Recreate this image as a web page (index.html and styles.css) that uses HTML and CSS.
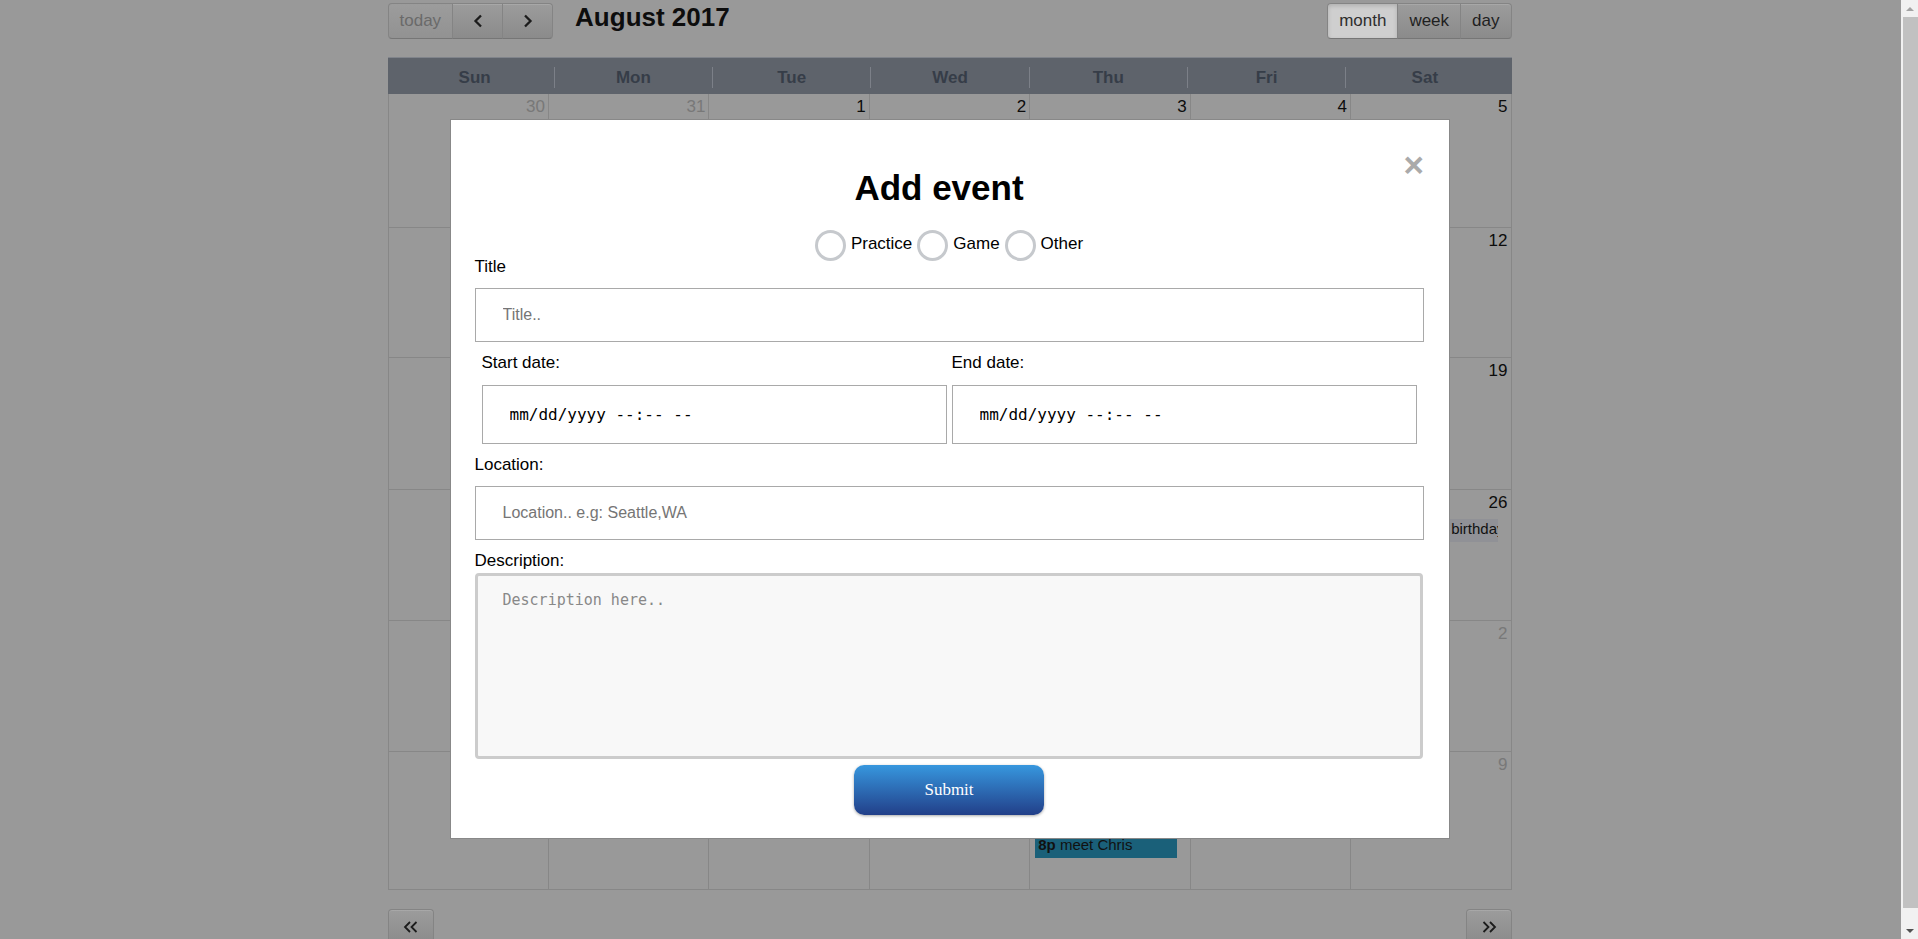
FILE: index.html
```html
<!DOCTYPE html>
<html lang="en">
<head>
<meta charset="utf-8">
<title>Calendar - Add event</title>
<link rel="stylesheet" href="styles.css">
</head>
<body>
<div class="page">
  <div class="calendar">
    <div class="toolbar">
      <div class="btn-group">
        <button class="fc-btn today" disabled>today</button>
        <button class="fc-btn icon-btn" aria-label="prev"><svg width="10" height="14" viewBox="0 0 10 14"><polyline points="8,1.5 2.5,7 8,12.5" fill="none" stroke="#1c1c1c" stroke-width="2.3"/></svg></button>
        <button class="fc-btn icon-btn" aria-label="next"><svg width="10" height="14" viewBox="0 0 10 14"><polyline points="2,1.5 7.5,7 2,12.5" fill="none" stroke="#1c1c1c" stroke-width="2.3"/></svg></button>
      </div>
      <h2 class="cal-title">August 2017</h2>
      <div class="btn-group views">
        <button class="fc-btn active">month</button>
        <button class="fc-btn">week</button>
        <button class="fc-btn">day</button>
      </div>
    </div>

    <div class="cal-head">
      <div class="dow">Sun</div>
      <div class="dow">Mon</div>
      <div class="dow">Tue</div>
      <div class="dow">Wed</div>
      <div class="dow">Thu</div>
      <div class="dow">Fri</div>
      <div class="dow">Sat</div>
    </div>

    <div class="cal-body">
      <div class="day other"><div class="num">30</div></div>
      <div class="day other"><div class="num">31</div></div>
      <div class="day"><div class="num">1</div></div>
      <div class="day"><div class="num">2</div></div>
      <div class="day"><div class="num">3</div></div>
      <div class="day"><div class="num">4</div></div>
      <div class="day"><div class="num">5</div></div>

      <div class="day"><div class="num">6</div></div>
      <div class="day"><div class="num">7</div></div>
      <div class="day"><div class="num">8</div></div>
      <div class="day"><div class="num">9</div></div>
      <div class="day"><div class="num">10</div></div>
      <div class="day"><div class="num">11</div></div>
      <div class="day"><div class="num">12</div></div>

      <div class="day"><div class="num">13</div></div>
      <div class="day"><div class="num">14</div></div>
      <div class="day"><div class="num">15</div></div>
      <div class="day"><div class="num">16</div></div>
      <div class="day"><div class="num">17</div></div>
      <div class="day"><div class="num">18</div></div>
      <div class="day"><div class="num">19</div></div>

      <div class="day"><div class="num">20</div></div>
      <div class="day"><div class="num">21</div></div>
      <div class="day"><div class="num">22</div></div>
      <div class="day"><div class="num">23</div></div>
      <div class="day"><div class="num">24</div></div>
      <div class="day"><div class="num">25</div></div>
      <div class="day"><div class="num">26</div><div class="event ev-allday">Christopher's birthday</div></div>

      <div class="day"><div class="num">27</div></div>
      <div class="day"><div class="num">28</div></div>
      <div class="day"><div class="num">29</div></div>
      <div class="day"><div class="num">30</div></div>
      <div class="day"><div class="num">31</div></div>
      <div class="day other"><div class="num">1</div></div>
      <div class="day other"><div class="num">2</div></div>

      <div class="day other"><div class="num">3</div></div>
      <div class="day other"><div class="num">4</div></div>
      <div class="day other"><div class="num">5</div></div>
      <div class="day other"><div class="num">6</div></div>
      <div class="day other"><div class="num">7</div>
        <div class="event ev-timed"><b>10a</b> practice</div>
        <div class="event ev-timed"><b>2p</b> game</div>
        <div class="event ev-timed"><b>8p</b> meet Chris</div>
      </div>
      <div class="day other"><div class="num">8</div></div>
      <div class="day other"><div class="num">9</div></div>
    </div>

    <div class="cal-footer">
      <button class="fc-btn nav-btn" aria-label="previous year"><svg width="16" height="12" viewBox="0 0 16 12"><polyline points="7,1 2,6 7,11" fill="none" stroke="#1c1c1c" stroke-width="1.8"/><polyline points="13.5,1 8.5,6 13.5,11" fill="none" stroke="#1c1c1c" stroke-width="1.8"/></svg></button>
      <button class="fc-btn nav-btn" aria-label="next year"><svg width="16" height="12" viewBox="0 0 16 12"><polyline points="2.5,1 7.5,6 2.5,11" fill="none" stroke="#1c1c1c" stroke-width="1.8"/><polyline points="9,1 14,6 9,11" fill="none" stroke="#1c1c1c" stroke-width="1.8"/></svg></button>
    </div>
  </div>

  <div class="overlay">
    <form class="modal">
      <div class="modal-head">
        <h2 class="modal-title">Add event</h2>
        <button type="button" class="close" aria-label="close">&times;</button>
      </div>
      <div class="types">
        <label class="type"><input type="radio" name="type" class="radio"><span class="type-text">Practice</span></label>
        <label class="type"><input type="radio" name="type" class="radio"><span class="type-text">Game</span></label>
        <label class="type"><input type="radio" name="type" class="radio"><span class="type-text">Other</span></label>
      </div>
      <label class="field-label">Title</label>
      <input type="text" class="text-input" placeholder="Title..">
      <div class="dates">
        <div class="date-col">
          <label class="field-label">Start date:</label>
          <input type="text" class="date-input" placeholder="mm/dd/yyyy --:-- --">
        </div>
        <div class="date-col">
          <label class="field-label">End date:</label>
          <input type="text" class="date-input" placeholder="mm/dd/yyyy --:-- --">
        </div>
      </div>
      <label class="field-label">Location:</label>
      <input type="text" class="text-input" placeholder="Location.. e.g: Seattle,WA">
      <label class="field-label">Description:</label>
      <textarea class="desc" placeholder="Description here.."></textarea>
      <div class="actions">
        <button type="submit" class="submit">Submit</button>
      </div>
    </form>
  </div>
</div>

<div class="scrollbar">
  <div class="sb-btn"><span class="arrow-up"></span></div>
  <div class="sb-thumb"></div>
  <div class="sb-btn"><span class="arrow-down"></span></div>
</div>
</body>
</html>
```

FILE: styles.css
```css
html, body {
  margin: 0;
  height: 939px;
  overflow: hidden;
}

body {
  display: flex;
  background: #999999;
  font-family: "Liberation Sans", Arial, sans-serif;
  font-size: 17px;
  color: #0d0d0d;
}

.page {
  flex: 1;
  position: relative;
  min-width: 0;
  padding-right: 2px;
}

/* ---------- calendar ---------- */
.calendar {
  width: 1124px;
  margin: 0 auto;
  padding-top: 3px;
}

.toolbar {
  display: flex;
  align-items: flex-start;
  height: 36px;
  margin-bottom: 18px;
}

.btn-group {
  display: flex;
}

.fc-btn {
  height: 36px;
  box-sizing: border-box;
  margin: 0;
  padding: 0 11px;
  border: 1px solid #848484;
  border-bottom-color: #767676;
  background: linear-gradient(#9c9c9c, #8b8b8b);
  box-shadow: inset 0 1px 0 rgba(255, 255, 255, 0.12);
  font-family: "Liberation Sans", Arial, sans-serif;
  font-size: 17px;
  color: #1f1f1f;
  display: flex;
  align-items: center;
  justify-content: center;
}

.btn-group .fc-btn + .fc-btn {
  margin-left: -1px;
}

.btn-group .fc-btn:first-child {
  border-radius: 4px 0 0 4px;
}

.btn-group .fc-btn:last-child {
  border-radius: 0 4px 4px 0;
}

.fc-btn.today {
  color: #6a6a6a;
  background: linear-gradient(#9c9c9c, #929292);
  box-shadow: none;
}

.icon-btn {
  width: 51px;
  padding: 0;
}

.fc-btn.active {
  background: #cfcfcf;
  color: #2e2e2e;
  box-shadow: inset 0 2px 4px rgba(0, 0, 0, 0.15);
}

.cal-title {
  margin: 0 0 0 22px;
  font-size: 26px;
  font-weight: bold;
  line-height: 1.15;
  color: #0d0d0d;
}

.views {
  margin-left: auto;
}

.cal-head {
  display: grid;
  grid-template-columns: repeat(7, 1fr);
  height: 37px;
  box-sizing: border-box;
  padding: 9px 8px 7px;
  background: #5e636b;
  border-top: 1px solid #80848b;
}

.dow {
  height: 21px;
  line-height: 21px;
  text-align: center;
  font-weight: bold;
  color: #363d48;
}

.dow + .dow {
  border-left: 1px solid #7c8088;
}

.cal-body {
  display: grid;
  grid-template-columns: repeat(7, 1fr);
  grid-template-rows: 134px 130px 132px 131px 131px 138px;
  border-left: 1px solid #878787;
}

.day {
  border-right: 1px solid #878787;
  border-bottom: 1px solid #878787;
  min-width: 0;
  overflow: hidden;
}

.num {
  padding: 3px 3px 2px;
  line-height: 20px;
  text-align: right;
  color: #0c0c0c;
}

.day.other .num {
  color: #787878;
}

.event {
  margin: 4px 13px 0 5px;
  padding: 1px 2px 5px 3px;
  font-size: 15px;
  line-height: 17px;
  white-space: nowrap;
  overflow: hidden;
  color: #111111;
}

.ev-allday {
  background: #909196;
}

.ev-timed {
  background: #1a6079;
}

.cal-footer {
  display: flex;
  justify-content: space-between;
  margin-top: 19px;
}

.nav-btn {
  width: 46px;
  padding: 0;
  border-radius: 4px;
}

/* ---------- modal ---------- */
.overlay {
  position: absolute;
  top: 0;
  left: 0;
  right: 2px;
  bottom: 0;
  display: flex;
  justify-content: center;
  align-items: flex-start;
  padding-top: 119px;
}

.modal {
  width: 1000px;
  box-sizing: border-box;
  margin: 0;
  padding: 25px 25px 23px 24px;
  background: #ffffff;
  border: 1px solid #888888;
  color: #000000;
}

.modal-head {
  display: flex;
  align-items: flex-start;
}

.modal-title {
  flex: 1;
  margin: 22.75px 0 0;
  text-align: center;
  font-size: 35px;
  font-weight: bold;
  line-height: normal;
  color: #000000;
}

.close {
  width: 20px;
  margin: 0;
  padding: 0;
  border: none;
  background: none;
  font-family: "Liberation Sans", Arial, sans-serif;
  font-size: 35px;
  font-weight: bold;
  line-height: normal;
  color: #aaaaaa;
  text-align: center;
}

.types {
  display: flex;
  justify-content: center;
  align-items: center;
  gap: 5px;
  margin-top: 22.7px;
  margin-bottom: -4.7px;
}

.type {
  display: flex;
  align-items: center;
  gap: 5px;
  font-size: 17px;
}

.radio {
  appearance: none;
  -webkit-appearance: none;
  width: 31px;
  height: 31px;
  box-sizing: border-box;
  margin: 0;
  border: 3px solid #c6c9cd;
  border-radius: 50%;
  background: #ffffff;
}

.type-text {
  padding-bottom: 4px;
}

.field-label {
  display: block;
  font-size: 17px;
  line-height: normal;
  color: #000000;
}

.text-input,
.date-input {
  display: block;
  width: 100%;
  box-sizing: border-box;
  margin: 11.5px 0 11px;
  border: 1px solid #a9a9a9;
  border-radius: 0;
  background: #ffffff;
  outline: none;
}

.text-input {
  height: 54px;
  padding: 0 27px;
  font-family: "Liberation Sans", Arial, sans-serif;
  font-size: 16px;
}

.text-input::placeholder {
  color: #757575;
}

.dates {
  display: flex;
  justify-content: center;
  gap: 5px;
}

.date-col {
  width: 49%;
}

.date-input {
  height: 59px;
  padding: 0 27px;
  font-family: "DejaVu Sans Mono", "Liberation Mono", monospace;
  font-size: 16px;
}

.date-input::placeholder {
  color: #000000;
  opacity: 1;
}

.desc {
  display: block;
  width: calc(100% - 1px);
  height: 186px;
  box-sizing: border-box;
  margin: 2px 0 0;
  padding: 15px 25px;
  border: 3px solid #cccccc;
  border-radius: 4px;
  background: #f8f8f8;
  font-family: "DejaVu Sans Mono", "Liberation Mono", monospace;
  font-size: 15px;
  resize: none;
  outline: none;
}

.desc::placeholder {
  color: #888888;
}

.actions {
  display: flex;
  justify-content: center;
  margin-top: 6px;
}

.submit {
  width: 190px;
  height: 50px;
  border: none;
  border-radius: 10px;
  background: linear-gradient(#3797de, #223f89);
  box-shadow: 0 1px 3px rgba(0, 0, 0, 0.35);
  color: #ffffff;
  font-family: "Liberation Serif", "Times New Roman", serif;
  font-size: 17px;
}

/* ---------- scrollbar ---------- */
.scrollbar {
  width: 17px;
  flex: none;
  display: flex;
  flex-direction: column;
  background: #f1f1f1;
}

.sb-btn {
  height: 17px;
  display: flex;
  align-items: center;
  justify-content: center;
}

.arrow-up {
  width: 0;
  height: 0;
  border-left: 4px solid transparent;
  border-right: 4px solid transparent;
  border-bottom: 4px solid #a3a3a3;
}

.arrow-down {
  width: 0;
  height: 0;
  border-left: 4px solid transparent;
  border-right: 4px solid transparent;
  border-top: 4px solid #505050;
}

.sb-thumb {
  flex: 1;
  margin: 0 0 14px 2px;
  background: #c1c1c1;
}
```
